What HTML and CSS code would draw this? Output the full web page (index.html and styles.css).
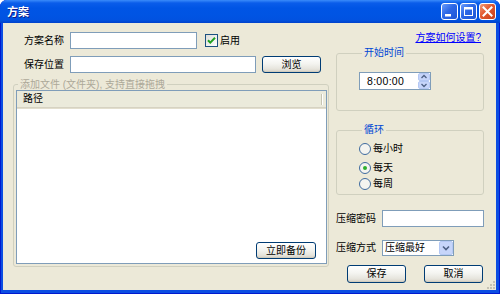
FILE: index.html
```html
<!DOCTYPE html>
<html lang="zh-CN">
<head>
    <meta charset="UTF-8">
    <title>方案</title>
    <link rel="stylesheet" href="styles.css">
</head>
<body>
    <div class="window">
        <div class="titlebar">
            <span class="title">方案</span>
            <div class="controls">
                <span class="ctl ctl-min"><svg width="15" height="15" viewBox="0 0 15 15"><rect x="3" y="10" width="6" height="2.5" fill="#fff"/></svg></span>
                <span class="ctl ctl-max"><svg width="15" height="15" viewBox="0 0 15 15"><rect x="3.5" y="3.5" width="8" height="8" fill="none" stroke="#fff" stroke-width="1"/><rect x="3" y="3" width="9" height="2.5" fill="#fff"/></svg></span>
                <span class="ctl ctl-close"><svg width="15" height="15" viewBox="0 0 15 15"><path d="M3.5 3.5 L11.5 11.5 M11.5 3.5 L3.5 11.5" stroke="#fff" stroke-width="2" stroke-linecap="square"/></svg></span>
            </div>
        </div>
        <div class="client">
            <div class="col-left">
                <div class="row">
                    <span class="lbl">方案名称</span>
                    <div class="textbox name-input"></div>
                    <span class="check"><svg width="13" height="13" viewBox="0 0 13 13"><defs><linearGradient id="cb" x1="0" y1="0" x2="1" y2="1"><stop offset="0" stop-color="#DCDCD7"/><stop offset="1" stop-color="#FFFFFF"/></linearGradient></defs><rect x="0.5" y="0.5" width="12" height="12" fill="url(#cb)" stroke="#1C5180"/><path d="M3 6.2 L5.3 8.6 L10 3.8" fill="none" stroke="#21A121" stroke-width="2"/></svg></span>
                    <span class="check-text">启用</span>
                </div>
                <div class="row row-path">
                    <span class="lbl">保存位置</span>
                    <div class="textbox path-input"></div>
                    <button class="btn browse">浏览</button>
                </div>
                <fieldset class="group files">
                    <legend>添加文件 (文件夹), 支持直接拖拽</legend>
                    <div class="listview">
                        <div class="lv-head"><span>路径</span><i class="lv-sep"></i></div>
                        <div class="lv-body"><button class="btn backup">立即备份</button></div>
                    </div>
                </fieldset>
            </div>
            <div class="col-right">
                <a class="help">方案如何设置?</a>
                <fieldset class="group time">
                    <legend>开始时间</legend>
                    <div class="spinner">
                        <span class="spin-text">8:00:00</span>
                        <span class="spin-btns">
                            <svg width="12" height="16" viewBox="0 0 12 16"><rect x="0.5" y="0.5" width="11" height="7" rx="1.5" fill="#C6D5FA" stroke="#B4C8F4"/><rect x="0.5" y="8.5" width="11" height="7" rx="1.5" fill="#C6D5FA" stroke="#B4C8F4"/><path d="M3.5 5 L6 2.5 L8.5 5" fill="none" stroke="#4D6185" stroke-width="1.3"/><path d="M3.5 11 L6 13.5 L8.5 11" fill="none" stroke="#4D6185" stroke-width="1.3"/></svg>
                        </span>
                    </div>
                </fieldset>
                <fieldset class="group cycle">
                    <legend>循环</legend>
                    <div class="radio"><svg width="12" height="12" viewBox="0 0 12 12"><circle cx="6" cy="6" r="5.5" fill="#F4F4F0" stroke="#3E6A9E"/></svg><span>每小时</span></div>
                    <div class="radio r2"><svg width="12" height="12" viewBox="0 0 12 12"><circle cx="6" cy="6" r="5.5" fill="#F4F4F0" stroke="#3E6A9E"/><circle cx="6" cy="6" r="2" fill="#2DAF2D"/></svg><span>每天</span></div>
                    <div class="radio r3"><svg width="12" height="12" viewBox="0 0 12 12"><circle cx="6" cy="6" r="5.5" fill="#F4F4F0" stroke="#3E6A9E"/></svg><span>每周</span></div>
                </fieldset>
                <div class="row pw-row">
                    <span class="lbl2">压缩密码</span>
                    <div class="textbox pw-input"></div>
                </div>
                <div class="row mode-row">
                    <span class="lbl2">压缩方式</span>
                    <div class="select">
                        <span class="select-text">压缩最好</span>
                        <span class="select-btn"><svg width="14" height="14" viewBox="0 0 14 14"><rect x="0.5" y="0.5" width="13" height="13" rx="1.5" fill="#C6D5FA" stroke="#B4C8F4"/><path d="M4 5.5 L7 8.5 L10 5.5" fill="none" stroke="#4D6185" stroke-width="1.6"/></svg></span>
                    </div>
                </div>
                <div class="actions">
                    <button class="btn">保存</button>
                    <button class="btn">取消</button>
                </div>
            </div>
            <svg class="grip" width="10" height="10" viewBox="0 0 10 10">
                <rect x="8" y="2" width="2" height="2" fill="#C5C2B2"/>
                <rect x="5" y="5" width="2" height="2" fill="#C5C2B2"/>
                <rect x="8" y="5" width="2" height="2" fill="#C5C2B2"/>
                <rect x="2" y="8" width="2" height="2" fill="#C5C2B2"/>
                <rect x="5" y="8" width="2" height="2" fill="#C5C2B2"/>
                <rect x="8" y="8" width="2" height="2" fill="#C5C2B2"/>
            </svg>
        </div>
    </div>
</body>
</html>
```

FILE: styles.css
```css
* {
    box-sizing: border-box;
}
body {
    margin: 0;
    font-family: "Liberation Sans", "Noto Sans CJK SC", sans-serif;
    font-size: 10px;
    line-height: 12px;
    color: #000;
}
.window {
    width: 500px;
    height: 294px;
    display: flex;
    flex-direction: column;
    background: #0B4DE2;
    border-radius: 7px 7px 0 0;
    overflow: hidden;
    box-shadow: inset 1px 0 #0019CF, inset -1px 0 #0019CF, inset 0 -1px #0019CF;
}
.titlebar {
    height: 23px;
    display: flex;
    align-items: center;
    justify-content: space-between;
    padding: 0 4px 0 7px;
    background: linear-gradient(#3A8BFA 0, #0A5DEA 3px, #0055E5 8px, #0054E3 16px, #0152E0 20px, #0042CB 23px);
}
.title {
    color: #fff;
    font-weight: bold;
    font-size: 11px;
    text-shadow: 1px 1px #0F1C89;
}
.controls {
    display: flex;
    gap: 2px;
}
.ctl {
    width: 17px;
    height: 17px;
    border: 1px solid #fff;
    border-radius: 3px;
    display: flex;
    align-items: center;
    justify-content: center;
    background: linear-gradient(135deg, #6A9CFB, #2C67E6 45%, #1D56D6);
}
.ctl-close {
    background: linear-gradient(135deg, #F29C7A, #E2582E 45%, #C8401B);
}
.client {
    flex: 1;
    margin: 0 4px 4px 3px;
    background: #ECE9D8;
    display: flex;
    padding: 0 12px 0 10px;
    position: relative;
}
.col-left {
    width: 316px;
    padding-top: 9px;
    display: flex;
    flex-direction: column;
}
.col-right {
    width: 148px;
    margin-left: 7px;
    display: flex;
    flex-direction: column;
}
.row {
    display: flex;
    align-items: center;
    height: 17px;
}
.row-path {
    margin-top: 7px;
}
.lbl {
    width: 57px;
    padding-left: 11px;
}
.lbl2 {
    width: 46px;
}
.textbox {
    height: 17px;
    border: 1px solid #7F9DB9;
    background: #fff;
}
.name-input {
    width: 127px;
}
.path-input {
    width: 186px;
}
.pw-input {
    width: 102px;
}
.check {
    display: flex;
    margin-left: 8px;
}
.check-text {
    margin-left: 2px;
}
.btn {
    font: inherit;
    height: 17px;
    padding: 0;
    border: 1px solid #003C74;
    border-radius: 3px;
    background: linear-gradient(#FFFFFF, #F4F4F0 45%, #E6E4DC 80%, #D6D0C5);
    box-shadow: inset 0 -1px #D0CCBE;
    color: #000;
}
.browse {
    width: 59px;
    margin-left: 6px;
}
.group {
    margin: 0;
    min-width: 0;
    border: 1px solid #D0D0BF;
    border-radius: 3px;
}
.group legend {
    padding: 0 2px;
    margin-left: 2px;
    line-height: 11px;
}
.files {
    margin-top: 6px;
    padding: 0 1px 2px 2px;
}
.files legend {
    color: #ACA899;
}
.listview {
    height: 174px;
    border: 1px solid #7F9DB9;
    background: #fff;
    display: flex;
    flex-direction: column;
}
.lv-head {
    height: 17px;
    display: flex;
    align-items: center;
    padding-left: 6px;
    background: #EBEADB;
    border-bottom: 1px solid #D6D2C2;
    box-shadow: 0 1px #E2DECD;
}
.lv-sep {
    margin-left: auto;
    margin-right: 3px;
    width: 2px;
    height: 11px;
    border-left: 1px solid #C7C5B2;
    border-right: 1px solid #fff;
}
.lv-body {
    flex: 1;
    display: flex;
    align-items: flex-end;
    justify-content: flex-end;
    padding: 0 10px 4px 0;
}
.backup {
    width: 60px;
}
.help {
    align-self: flex-end;
    margin-top: 9px;
    margin-right: 3px;
    color: #0000FF;
    text-decoration: underline;
}
.time {
    margin-top: 3px;
    padding: 13px 0 20px 22px;
}
.time legend,
.cycle legend {
    color: #0046D5;
    margin-left: 3px;
    line-height: 12px;
}
.spinner {
    width: 72px;
    height: 18px;
    border: 1px solid #7F9DB9;
    background: #fff;
    display: flex;
    align-items: center;
    justify-content: space-between;
    padding: 0 0 0 7px;
}
.spin-text {
    font-size: 10.5px;
    letter-spacing: 0.3px;
}
.spin-btns {
    display: flex;
}
.cycle {
    margin-top: 13px;
    padding: 5px 0 2px 22px;
}
.radio {
    display: flex;
    align-items: center;
    height: 16px;
}
.radio span {
    margin-left: 2px;
}
.r2 {
    margin-top: 3px;
}
.pw-row {
    margin-top: 15px;
}
.mode-row {
    margin-top: 13px;
    height: 16px;
}
.select {
    width: 72px;
    height: 16px;
    border: 1px solid #7F9DB9;
    background: #fff;
    display: flex;
    align-items: center;
    justify-content: space-between;
    padding-left: 2px;
}
.select-btn {
    display: flex;
}
.actions {
    margin-top: 9px;
    padding-left: 11px;
    display: flex;
    gap: 18px;
}
.actions .btn {
    width: 59px;
    height: 18px;
}
.grip {
    position: absolute;
    right: 1px;
    bottom: 1px;
}
```
